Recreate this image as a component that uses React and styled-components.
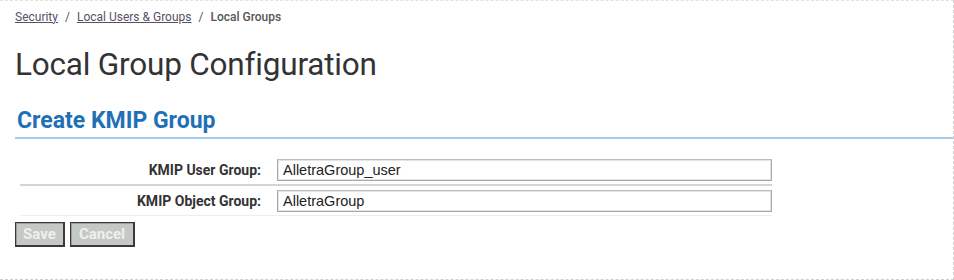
import React from "react";
import styled, { createGlobalStyle } from "styled-components";

const GlobalStyle = createGlobalStyle`
  html, body {
    margin: 0;
    padding: 0;
    background: #ffffff;
  }
  body {
    font-family: Roboto, "Liberation Sans", Arial, sans-serif;
  }
`;

const Frame = styled.div`
  box-sizing: border-box;
  width: 954px;
  height: 280px;
  border-top: 1px dashed #e2e2e2;
  border-right: 1px dashed #cfcfcf;
  border-bottom: 1px dashed #cfcfcf;
  padding: 7px 0 0 15px;
  overflow: hidden;
`;

const Crumbs = styled.nav`
  display: flex;
  align-items: center;
  gap: 7px;
  font-size: 12px;
  color: #555;
  height: 17px;
`;

const CrumbLink = styled.a`
  color: #5a4f66;
  text-decoration: underline;
  cursor: pointer;
`;

const CrumbCurrent = styled.span`
  color: #555;
  font-weight: 500;
`;

const Title = styled.h1`
  margin: 20px 0 0 0;
  font-size: 31.5px;
  font-weight: 400;
  color: #333;
  line-height: 40px;
  letter-spacing: -0.2px;
`;

const SectionHead = styled.h2`
  margin: 22px 0 0 0;
  padding: 0 0 2px 2px;
  font-size: 23px;
  font-weight: 700;
  color: #1f70b5;
  line-height: 28px;
  border-bottom: 2px solid #a7cbe8;
`;

const FormTable = styled.div`
  margin: 16px 0 0 5px;
  width: 752px;
`;

const Row = styled.div`
  display: grid;
  grid-template-columns: 248px 1fr;
  align-items: center;
  padding: 4px 0 3px 0;
  border-bottom: ${(p) => (p.last ? "1px solid #eeeeee" : "2px solid #d4d4d4")};
`;

const Label = styled.label`
  text-align: right;
  padding-right: 7px;
  font-size: 14px;
  font-weight: 700;
  color: #333;
`;

const Input = styled.input`
  box-sizing: border-box;
  margin-left: 9px;
  width: 495px;
  height: 22px;
  padding: 1px 5px;
  border: 1px solid #a9a9a9;
  border-top-color: #bdbdbd;
  box-shadow: inset 0 0 0 1px #e4e4e4;
  font-family: "Liberation Sans", Arial, sans-serif;
  font-size: 14.5px;
  color: #222;
  outline: none;
`;

const Buttons = styled.div`
  display: flex;
  gap: 5px;
  margin-top: 6px;
`;

const Button = styled.button`
  box-sizing: border-box;
  height: 25px;
  width: ${(p) => p.w}px;
  padding: 0;
  background: #c5c9c3;
  border: 1px solid #3a3a3a;
  border-right-width: 2px;
  border-bottom-width: 2px;
  box-shadow: inset 1px 1px 0 #9a9d98;
  color: #eef0ec;
  font-family: Roboto, "Liberation Sans", Arial, sans-serif;
  font-weight: 700;
  font-size: 15px;
  cursor: default;
`;

const App = () => {
  return (
    <>
      <GlobalStyle />
      <Frame>
        <Crumbs>
          <CrumbLink>Security</CrumbLink>
          <span>/</span>
          <CrumbLink>Local Users &amp; Groups</CrumbLink>
          <span>/</span>
          <CrumbCurrent>Local Groups</CrumbCurrent>
        </Crumbs>
        <Title>Local Group Configuration</Title>
        <SectionHead>Create KMIP Group</SectionHead>
        <FormTable>
          <Row>
            <Label>KMIP User Group:</Label>
            <Input defaultValue="AlletraGroup_user" />
          </Row>
          <Row last>
            <Label>KMIP Object Group:</Label>
            <Input defaultValue="AlletraGroup" />
          </Row>
        </FormTable>
        <Buttons>
          <Button w={50} disabled>Save</Button>
          <Button w={65} disabled>Cancel</Button>
        </Buttons>
      </Frame>
    </>
  );
};

export default App;
